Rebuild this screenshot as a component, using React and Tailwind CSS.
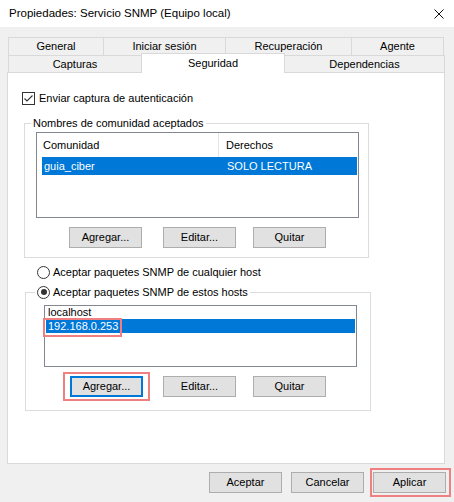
import React from 'react';

function Btn({ children, focused, className = '' }) {
  return (
    <div
      className={`w-[73px] h-[21px] bg-[#e1e1e1] flex items-center justify-center shrink-0 ${
        focused ? 'border-2 border-[#0078d7]' : 'border border-[#adadad]'
      } ${className}`}
    >
      {children}
    </div>
  );
}

function Mark({ className }) {
  // red annotation frame drawn over the screenshot
  return <span className={`absolute border-2 border-[#f08080] pointer-events-none ${className}`} />;
}

function Tab({ label, w, first, selected }) {
  return (
    <div
      className={`${w} flex items-center justify-center border-t border-r border-[#d9d9d9] ${
        first ? 'border-l' : ''
      } ${selected ? 'h-[20px] -mb-px bg-white relative z-10 border-l -ml-px' : 'h-full bg-[#f0f0f0]'}`}
    >
      {label}
    </div>
  );
}

function Radio({ checked }) {
  return (
    <span className="w-[13px] h-[13px] rounded-full border border-[#333] bg-white flex items-center justify-center shrink-0">
      {checked && <span className="w-[6px] h-[6px] rounded-full bg-[#333]" />}
    </span>
  );
}

export default function App() {
  return (
    <div className="w-[454px] h-[502px] bg-[#f0f0f0] flex flex-col font-['Liberation_Sans',Arial,sans-serif] text-[11px] text-black leading-none">
      {/* barra de titulo */}
      <div className="h-[27px] bg-white flex items-center justify-between pl-[9px] pr-[9px]">
        <span className="text-[11.5px]">Propiedades: Servicio SNMP (Equipo local)</span>
        <svg width="10" height="10" viewBox="0 0 10 10" className="mr-px">
          <path d="M0.5 0.5 L9.5 9.5 M9.5 0.5 L0.5 9.5" stroke="#111" strokeWidth="1" />
        </svg>
      </div>

      {/* pestañas */}
      <div className="mt-[10px] ml-[8px] w-[437px]">
        <div className="flex h-[18px]">
          <Tab label="General" w="w-[96px]" first />
          <Tab label="Iniciar sesión" w="w-[122px]" />
          <Tab label="Recuperación" w="w-[126px]" />
          <Tab label="Agente" w="w-[92px]" />
        </div>
        <div className="flex h-[17px] items-end">
          <Tab label="Capturas" w="w-[134px]" first />
          <Tab label="Seguridad" w="w-[144px]" selected />
          <Tab label="Dependencias" w="w-[160px]" />
        </div>
      </div>

      {/* panel Seguridad */}
      <div className="ml-[7px] w-[438px] h-[392px] bg-white border border-[#d9d9d9] flex flex-col">
        <div className="mt-[19px] ml-[14px] flex items-center gap-[4px] h-[13px]">
          <span className="w-[13px] h-[13px] border border-[#333] flex items-center justify-center">
            <svg width="11" height="11" viewBox="0 0 11 11">
              <path d="M1.5 5.5 L4 8 L9.5 2.5" fill="none" stroke="#333" strokeWidth="1.1" />
            </svg>
          </span>
          <span>Enviar captura de autenticación</span>
        </div>

        <fieldset className="mt-[10px] ml-[16px] w-[345px] border border-[#dcdcdc] pb-[9px]">
          <legend className="ml-[6px] px-[2px] leading-[16px]">Nombres de comunidad aceptados</legend>
          <div className="mt-px ml-[11px] w-[323px] h-[86px] border border-[#828790] flex flex-col">
            <div className="h-[24px] flex">
              <div className="w-[182px] border-r border-[#e5e5e5] flex items-center pl-[6px]">Comunidad</div>
              <div className="flex items-center pl-[7px]">Derechos</div>
            </div>
            <div className="ml-[5px] mr-px h-[18px] bg-[#0078d7] text-white flex items-center">
              <span className="w-[177px] pl-[2px]">guia_ciber</span>
              <span className="pl-[8px]">SOLO LECTURA</span>
            </div>
          </div>
          <div className="mt-[9px] ml-[44px] flex">
            <Btn>Agregar...</Btn>
            <Btn className="ml-[21px]">Editar...</Btn>
            <Btn className="ml-[17px]">Quitar</Btn>
          </div>
        </fieldset>

        <div className="mt-[6px] ml-[29px] h-[16px] flex items-center gap-[3px]">
          <Radio />
          <span>Aceptar paquetes SNMP de cualquier host</span>
        </div>

        <fieldset className="mt-[4px] ml-[17px] w-[346px] border border-[#dcdcdc] pb-[13px]">
          <legend className="ml-[9px] px-[2px] leading-[16px]">
            <span className="flex items-center gap-[3px]">
              <Radio checked />
              <span>Aceptar paquetes SNMP de estos hosts</span>
            </span>
          </legend>
          <div className="mt-[5px] ml-[18px] w-[313px] h-[62px] border border-[#828790] flex flex-col">
            <div className="h-[13px] flex items-center pl-[3px]">localhost</div>
            <div className="mx-px h-[14px] bg-[#0078d7] text-white flex items-center pl-[2px]">
              <span className="relative h-[14px] leading-[14px]">
                192.168.0.253
                <Mark className="-left-[5px] -right-[4px] -top-[1px] -bottom-[4px]" />
              </span>
            </div>
          </div>
          <div className="mt-[9px] ml-[44px] flex">
            <div className="relative">
              <Btn focused>Agregar...</Btn>
              <Mark className="-left-[7px] -right-[7px] -top-[4px] -bottom-[4px]" />
            </div>
            <Btn className="ml-[20px]">Editar...</Btn>
            <Btn className="ml-[17px]">Quitar</Btn>
          </div>
        </fieldset>
      </div>

      {/* botones del dialogo */}
      <div className="mt-[8px] pr-[8px] flex justify-end gap-[9px]">
        <Btn>Aceptar</Btn>
        <Btn>Cancelar</Btn>
        <div className="relative">
          <Btn>Aplicar</Btn>
          <Mark className="-left-[3px] -right-[5px] -top-[4px] -bottom-[4px]" />
        </div>
      </div>
    </div>
  );
}
